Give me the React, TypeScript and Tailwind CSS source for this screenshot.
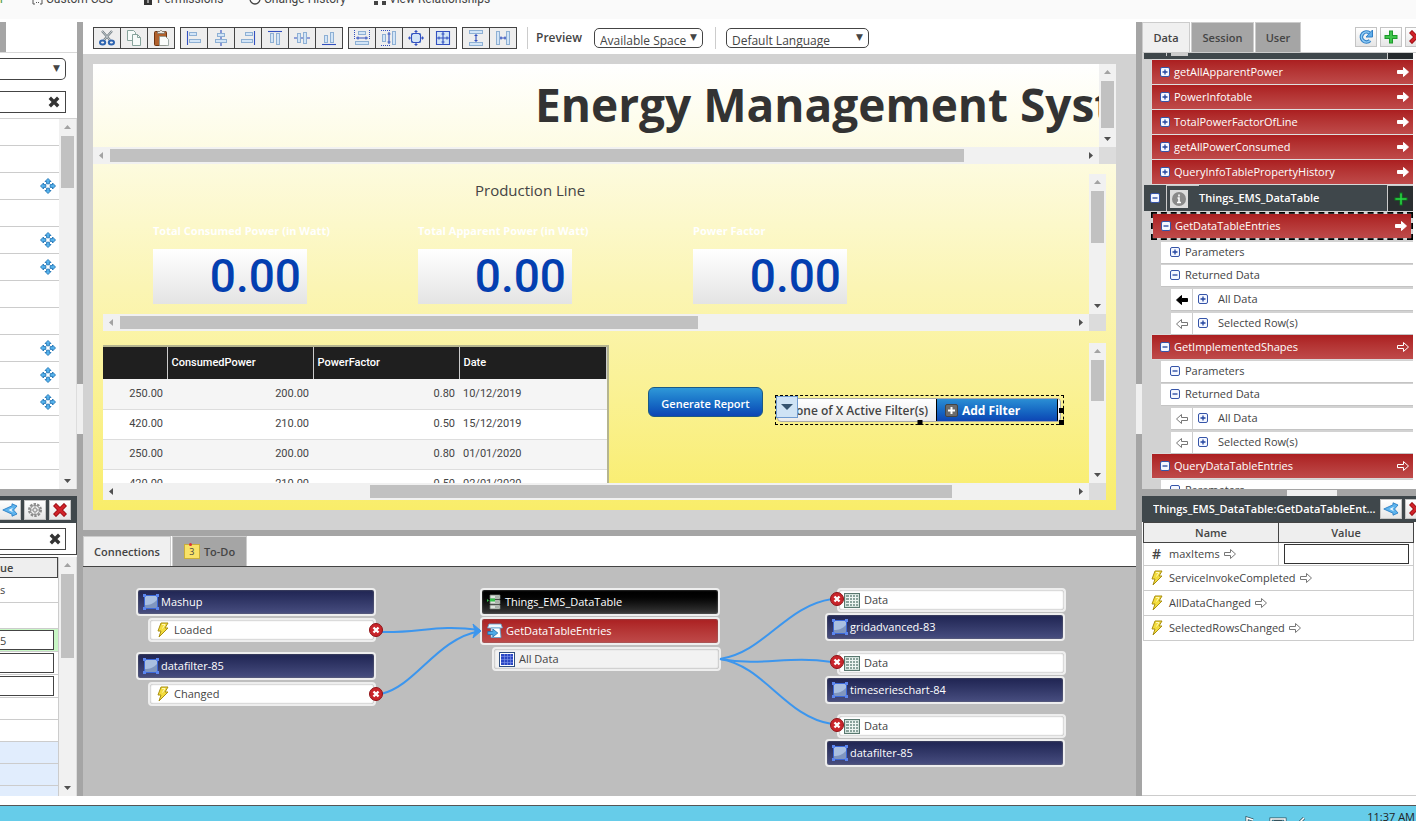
import { ReactNode } from 'react';
import clsx from 'clsx';

const EVENT_PATH = 'M5 1h7L9 6h3L3 15l2-6H2z';

const Bolt = () => (
  <svg width="14" height="16" viewBox="0 0 14 16" className="shrink-0">
    <path d={EVENT_PATH} fill="#f3dc3c" stroke="#a98f12" strokeWidth="1" strokeLinejoin="round" />
    <path d="M6 2.500h3L6.500 6.500" fill="none" stroke="#fff8b8" />
  </svg>
);

interface ArrowProps {
  left?: boolean;
  fill?: string;
  stroke?: string;
}

const Arrow = ({ left, fill = 'none', stroke = '#777' }: ArrowProps) => (
  <svg width="12" height="10" viewBox="0 0 12 10" className={clsx('shrink-0', left && 'rotate-180')}>
    <path d="M.5 3.500h6v-3L11.500 5l-5 4.500v-3h-6z" fill={fill} stroke={stroke} />
  </svg>
);

const Toggle = ({ open }: { open?: boolean }) => (
  <svg width="10" height="10" viewBox="0 0 10 10" className="shrink-0">
    <rect x=".5" y=".5" width="9" height="9" rx="1.500" fill="#f4f7ff" stroke="#3554a8" />
    <path d={open ? 'M2.500 5h5' : 'M2.500 5h5M5 2.500v5'} stroke="#2244a0" strokeWidth="1.300" />
  </svg>
);

const CloseX = () => (
  <svg width="12" height="12" viewBox="0 0 12 12">
    <path d="M3 3l6 6M9 3l-6 6" stroke="#333" strokeWidth="3.400" strokeLinecap="square" strokeLinejoin="round" />
  </svg>
);

const RedX = () => (
  <svg width="14" height="14" viewBox="0 0 14 14" className="shrink-0">
    <path d="M3 3l8 8M11 3l-8 8" stroke="#9c0f14" strokeWidth="4.400" strokeLinecap="square" />
    <path d="M3 3l8 8M11 3l-8 8" stroke="#d1232a" strokeWidth="2.600" strokeLinecap="square" />
  </svg>
);

const GreenPlus = ({ dark }: { dark?: boolean }) => (
  <svg width="14" height="14" viewBox="0 0 14 14" className="shrink-0">
    <path d="M7 .5v13M.5 7h13" stroke={dark ? '#0d7a1c' : '#1c9a2a'} strokeWidth={dark ? 3 : 4} />
    <path d="M7 1.500v11M1.500 7h11" stroke={dark ? '#2ad645' : '#3fc44b'} strokeWidth={dark ? 1.500 : 2} />
  </svg>
);

const Share = () => (
  <svg width="16" height="14" viewBox="0 0 16 14" className="shrink-0">
    <path d="M.8 7L10 2.800V.800l5 2.200-3.500 4 3.500 4-5 2.200v-2z" fill="#5db4ee" stroke="#2c7fc4" strokeWidth=".9" strokeLinejoin="round" />
    <path d="M6.500 7l4.500-2.200-1.500 2.200 1.500 2.200z" fill="#f4f9fd" />
  </svg>
);

const Gear = () => (
  <svg width="16" height="16" viewBox="0 0 16 16" fill="none" className="shrink-0">
    <circle cx="8" cy="8" r="5.800" stroke="#8c8c8c" strokeWidth="2.400" strokeDasharray="2.400 1.200" />
    <circle cx="8" cy="8" r="4.600" fill="#e9e9e9" stroke="#8f8f8f" />
    <circle cx="8" cy="8" r="2" stroke="#8f8f8f" />
    <path d="M8 3.500v2.500M8 10v2.500M3.500 8H6M10 8h2.500" stroke="#9a9a9a" />
  </svg>
);

const Refresh = () => (
  <svg width="16" height="16" viewBox="0 0 16 16" fill="none" className="shrink-0">
    <path d="M12 11.500A5 5 0 1 1 11.500 4" stroke="#2f7fc6" strokeWidth="3.600" />
    <path d="M12 11.500A5 5 0 1 1 11.500 4" stroke="#8fcbf5" strokeWidth="1.600" />
    <path d="M14.500 1v7H8z" fill="#62aee9" stroke="#2f7fc6" />
  </svg>
);

const Move = () => (
  <svg width="16" height="16" viewBox="0 0 16 16" className="shrink-0" fill="#57b4ee" stroke="#2374b4" strokeWidth=".9">
    <path d="M8 .5l3 3H9.400v2.300H6.600V3.500H5z" />
    <path d="M8 15.500l3-3H9.400v-2.300H6.600v2.300H5z" />
    <path d="M.5 8l3-3v1.600h2.300v2.800H3.500V11z" />
    <path d="M15.500 8l-3-3v1.600h-2.300v2.800h2.300V11z" />
  </svg>
);

const WidgetIcon = () => (
  <svg width="16" height="16" viewBox="0 0 16 16" className="shrink-0">
    <rect x="1.500" y="1.500" width="13" height="13" fill="#a9bfe0" stroke="#3b68d8" />
    <path d="M2 14v-3c5 0 8-1 12-5v8z" fill="#7f96bf" />
    <path d="M0 0h3v3H0zM13 0h3v3h-3zM0 13h3v3H0zM13 13h3v3h-3z" fill="#5c86ee" />
  </svg>
);

const DataIcon = ({ blue }: { blue?: boolean }) => (
  <svg width="16" height="15" viewBox="0 0 16 15" className="shrink-0">
    <rect x=".5" y=".5" width="15" height="14" fill={blue ? '#fff' : '#d3e2dc'} stroke={blue ? '#2f4f7f' : '#59786f'} />
    <rect x="2" y="2" width="12" height="11" fill={blue ? '#2b47c4' : '#8aa39c'} />
    <path d="M2 4.500h12M2 7.500h12M2 10.500h12M5.500 2v11M8.500 2v11M11.500 2v11" stroke={blue ? '#8397ea' : '#eef5f2'} strokeWidth={blue ? .6 : 1} />
  </svg>
);

const ServerIcon = () => (
  <svg width="16" height="16" viewBox="0 0 16 16" className="shrink-0">
    <path d="M4 1h10v4H4zM4 6h10v4H4zM4 11h10v4H4z" fill="#dfe4df" stroke="#6d756d" strokeWidth=".8" />
    <path d="M9 3h4M9 8h4M9 13h4" stroke="#7b857b" />
    <path d="M4 4.500h5v3H4zM1 5l2 1.500L1 8z" fill="#35c24a" />
  </svg>
);

const ServiceIcon = () => (
  <svg width="16" height="16" viewBox="0 0 16 16" className="shrink-0">
    <path d="M2 1h12l1.500 4h-15z" fill="#eef7fd" stroke="#5c9dcb" strokeWidth=".8" />
    <path d="M4 5h9l1 9.500H4z" fill="#fff" stroke="#5c9dcb" strokeWidth=".8" />
    <path d="M.8 8.500h5V6l5 4-5 4v-2.500h-5z" fill="#4fabe8" stroke="#1f6fae" strokeWidth=".8" />
  </svg>
);

const Caret = ({ dir, off }: { dir: 'up' | 'down' | 'left' | 'right'; off?: boolean }) => {
  const d = {
    up: 'M1 6l3.500-4L8 6z',
    down: 'M1 3l3.500 4L8 3z',
    left: 'M6 1L2 4.500 6 8z',
    right: 'M3 1l4 3.500L3 8z',
  }[dir];
  return (
    <span className="flex h-[17px] w-[17px] shrink-0 items-center justify-center">
      <svg width="9" height="9" viewBox="0 0 9 9">
        <path d={d} fill={off ? '#a3a3a3' : '#505050'} />
      </svg>
    </span>
  );
};

interface ScrollProps {
  start?: string;
  thumb: string;
  startOff?: boolean;
}

const VScroll = ({ start, thumb, startOff = true }: ScrollProps) => (
  <div className="flex w-[17px] shrink-0 flex-col items-center bg-[#f1f1f1]">
    <Caret dir="up" off={startOff} />
    <div className={start} />
    <div className={clsx('w-[13px] bg-[#c1c1c1]', thumb)} />
    <div className="flex-1" />
    <Caret dir="down" />
  </div>
);

const HScroll = ({ start, thumb, startOff = true }: ScrollProps) => (
  <div className="flex h-[17px] shrink-0">
    <div className="flex flex-1 items-center bg-[#f1f1f1]">
      <Caret dir="left" off={startOff} />
      <div className={start} />
      <div className={clsx('h-[13px] bg-[#c1c1c1]', thumb)} />
      <div className="flex-1" />
      <Caret dir="right" />
    </div>
    <div className="w-[17px] bg-[#dcdcdc]" />
  </div>
);

const IconButton = ({ label, children }: { label: string; children: ReactNode }) => (
  <button aria-label={label} className="flex h-5 w-[22px] shrink-0 items-center justify-center border border-[#c4c4c4] bg-linear-to-b from-white to-[#e6e6e6]">
    {children}
  </button>
);

const TopNav = () => (
  <nav className="h-[19px] shrink-0 overflow-hidden bg-[#fafafa] font-['Roboto',sans-serif] text-[12px] text-[#444]">
    <div className="-mt-[9px] flex h-4 items-center">
      <span className="w-8 shrink-0 text-[#4c9a3a]">r</span>
      <a href="#css" className="flex w-[112px] items-center gap-[3px]">
        <svg width="11" height="12" viewBox="0 0 11 12" fill="none" stroke="#555">
          <path d="M3 1H1v10h2M8 1h2v10H8M4 9.500h1M6 9.500h1" />
        </svg>
        Custom CSS
      </a>
      <a href="#permissions" className="flex w-[105px] items-center gap-[5px]">
        <svg width="8" height="12" viewBox="0 0 8 12">
          <path d="M0 4h8v8H0z" fill="#333" />
          <path d="M4 6v4" stroke="#fff" />
        </svg>
        Permissions
      </a>
      <a href="#history" className="flex w-[125px] items-center gap-[3px]">
        <svg width="12" height="12" viewBox="0 0 12 12" fill="none" stroke="#444" strokeWidth="1.300">
          <circle cx="6" cy="6" r="5" />
        </svg>
        Change History
      </a>
      <a href="#relationships" className="flex items-center gap-[3px]">
        <svg width="12" height="12" viewBox="0 0 12 12" fill="#444">
          <path d="M4 0h4v4H4zM0 8h4v4H0zM8 8h4v4H8z" />
        </svg>
        View Relationships
      </a>
    </div>
  </nav>
);

const hasMove = [false, false, true, false, true, true, false, false, true, true, true, false, false, false];

const LeftPanel = () => (
  <aside className="flex w-[77px] shrink-0 flex-col">
    <div className="flex h-[467px] flex-col overflow-hidden">
      <div className="h-[31px] shrink-0 border-b border-[#d8d8d8]">
        <div className="h-[30px] w-1.5 bg-[#a5a5a5]" />
      </div>
      <div className="flex h-[65px] shrink-0 flex-col gap-[11px] pt-[5px]">
        <div className="relative h-[22px] w-[66px]">
          <select aria-label="Widget category" className="h-full w-full appearance-none rounded-r-[5px] border border-l-0 border-[#444] bg-white">
            <option></option>
          </select>
          <span className="pointer-events-none absolute top-1 right-1.5 text-[9px] leading-3 font-['DejaVu_Sans',sans-serif]">▼</span>
        </div>
        <div className="flex h-[22px] w-[66px] items-center border border-l-0 border-[#444] pr-[5px]">
          <input aria-label="Filter widgets" className="h-full w-0 flex-1" />
          <button aria-label="Clear filter"><CloseX /></button>
        </div>
      </div>
      <div className="flex min-h-0 flex-1 border-t border-[#d2d2d2]">
        <ul className="flex-1 overflow-hidden">
          {hasMove.map((m, i) => (
            <li key={i} className="flex h-[27px] items-center justify-end border-b border-[#ccc] pr-[3px]">
              {m && <Move />}
            </li>
          ))}
        </ul>
        <VScroll thumb="h-[52px]" />
        <div className="w-px bg-[#ddd]" />
      </div>
    </div>
    <div className="h-[7px] shrink-0 bg-[#a5a5a5]" />
    <div className="flex h-[27px] shrink-0 items-center justify-end gap-[3px] bg-[#3f474b] pr-1.5">
      <IconButton label="Bindings"><Share /></IconButton>
      <IconButton label="Configure"><Gear /></IconButton>
      <IconButton label="Delete"><RedX /></IconButton>
    </div>
    <div className="flex h-8 shrink-0 items-center border-r border-b border-[#444]">
      <div className="flex h-[22px] w-[66px] items-center border border-l-0 border-[#444] pr-1">
        <input aria-label="Filter properties" className="h-full w-0 flex-1" />
        <button aria-label="Clear property filter"><CloseX /></button>
      </div>
    </div>
    <div className="flex min-h-0 flex-1 pt-0.5">
      <div className="flex-1 overflow-hidden border-r border-[#ccc]">
        <table className="w-full border-collapse text-left">
          <thead>
            <tr className="h-5">
              <th className="border border-l-0 border-[#444] bg-[#eee] p-0 font-semibold">ue</th>
            </tr>
          </thead>
          <tbody>
            <tr className="h-[25px] border-b border-[#ccc]"><td className="p-0 leading-3">s</td></tr>
            <tr className="h-[26px] border-b border-[#ccc]"><td /></tr>
            {['5', '', ''].map((v, i) => (
              <tr key={i} className={clsx('h-[23px] border-b border-[#ccc]', i === 0 && 'bg-[#c8f7c5]')}>
                <td className="p-0">
                  <input aria-label={`Property value ${i + 1}`} defaultValue={v} className="block h-5 w-[54px] border border-l-0 border-[#444] bg-white" />
                </td>
              </tr>
            ))}
            <tr className="h-[22px] border-b border-[#ccc]"><td /></tr>
            <tr className="h-[22px] border-b border-[#ccc]"><td /></tr>
            <tr className="h-[22px] border-b border-[#ccc] bg-[#e1edfd]"><td /></tr>
            <tr className="h-[22px] border-b border-[#ccc] bg-[#e1edfd]"><td /></tr>
            <tr className="h-[22px] border-b border-[#ccc] bg-[#e1edfd]"><td /></tr>
          </tbody>
        </table>
      </div>
      <VScroll thumb="h-[84px]" />
      <div className="w-px bg-[#ddd]" />
    </div>
  </aside>
);

// pale blue blocks, dark blue guide lines
interface Tool {
  name: string;
  boxes?: [number, number, number, number][];
  lines?: string;
  dots?: string;
  art?: ReactNode;
}

const toolGroups: Tool[][] = [
  [
    {
      name: 'Cut',
      art: (
        <g fill="none">
          <path d="M3 1l8 9M13 1L5 10" stroke="#6f7b80" strokeWidth="2.200" />
          <path d="M3 1l8 9M13 1L5 10" stroke="#dfe5e8" strokeWidth=".8" />
          <ellipse cx="3.600" cy="12.500" rx="2.600" ry="2" stroke="#2e64b0" strokeWidth="2" />
          <ellipse cx="12.400" cy="12.500" rx="2.600" ry="2" stroke="#2e64b0" strokeWidth="2" />
        </g>
      ),
    },
    {
      name: 'Copy',
      art: (
        <g fill="#f6fbf9" stroke="#87a49c">
          <path d="M1.500.500h6l2 2v8h-8z" />
          <path d="M6.500 4.500h5l3 3v8h-8z" />
          <path d="M11.500 4.500v3h3" fill="none" />
        </g>
      ),
    },
    {
      name: 'Paste',
      art: (
        <g>
          <rect x="1.500" y="1.500" width="12" height="14" rx="1" fill="#b0602c" stroke="#6f3410" />
          <path d="M4.500 3.500v-2h2l1-1h1l1 1h2v2z" fill="#e8e4dd" stroke="#7c7468" strokeWidth=".8" />
          <path d="M6.500 6.500h6l3 3v6h-9z" fill="#fafcfb" stroke="#8a9a96" strokeWidth=".8" />
        </g>
      ),
    },
  ],
  [
    { name: 'Align left', boxes: [[3, 2, 8, 4], [3, 9, 12, 4]], lines: 'M1.500 1v14' },
    { name: 'Align center', boxes: [[4, 3, 8, 4], [2, 9, 12, 4]], lines: 'M8 0v3M8 7v2M8 13v3' },
    { name: 'Align right', boxes: [[5, 2, 8, 4], [1, 9, 12, 4]], lines: 'M14.500 1v14' },
    { name: 'Align top', boxes: [[3, 3, 4, 10], [9, 3, 4, 12]], lines: 'M1 1.500h14' },
    { name: 'Align middle', boxes: [[3, 3, 4, 10], [9, 2, 4, 12]], lines: 'M0 8h3M7 8h2M13 8h3' },
    { name: 'Align bottom', boxes: [[3, 5, 4, 8], [9, 2, 4, 11]], lines: 'M1 14.500h14' },
  ],
  [
    { name: 'Same width', boxes: [[4, 1, 8, 4], [1, 11, 14, 4]], lines: 'M2 8h12M4 6.500v3M12 6.500v3', dots: 'M.5 0v10M15.500 0v10' },
    { name: 'Same height', boxes: [[1, 4, 4, 8], [11, 1, 4, 14]], lines: 'M8 2v12M6.500 4h3M6.500 12h3', dots: 'M0 .5h10M0 15.500h10' },
    { name: 'Same size', boxes: [[3, 3, 10, 10]], lines: 'M5 3.500h6l1.500 1.500v6L11 12.500H5L3.500 11V5zM8 0v3M8 13v3M0 8h3M13 8h3M6.500 1.500h3M6.500 14.500h3M1.500 6.500v3M14.500 6.500v3' },
    { name: 'Fit to grid', boxes: [[1, 1, 14, 14]], lines: 'M1.500 1.500h13v13h-13zM8 1v14M1 8h14M6.500 4h3M6.500 12h3M4 6.500v3M12 6.500v3' },
  ],
  [
    { name: 'Distribute vertically', boxes: [[1, 0, 14, 4], [1, 12, 14, 4]], lines: 'M8 4v8M6.500 5.500h3M6.500 10.500h3' },
    { name: 'Distribute horizontally', boxes: [[1, 1, 4, 14], [11, 1, 4, 14]], lines: 'M5 8h6M6 6.500v3M10 6.500v3' },
  ],
];

const ToolIcon = ({ tool }: { tool: Tool }) => (
  <svg width="16" height="16" viewBox="0 0 16 16">
    {tool.art}
    {tool.boxes?.map(([x, y, w, h], i) => (
      <rect key={i} x={x + 0.5} y={y + 0.5} width={w - 1} height={h - 1} fill="#d3e5f7" stroke="#8eb0d4" />
    ))}
    {tool.lines && <path d={tool.lines} fill="none" stroke="#3250c0" strokeWidth="1.100" />}
    {tool.dots && <path d={tool.dots} fill="none" stroke="#3250c0" strokeDasharray="1 1" />}
  </svg>
);

const Picker = ({ label, value, width }: { label: string; value: string; width: string }) => (
  <div className={clsx('relative h-5', width)}>
    <select aria-label={label} className="h-5 w-full appearance-none rounded-[5px] border border-[#444] bg-white px-[5px] pt-1 text-[12px] leading-4">
      <option>{value}</option>
    </select>
    <span className="pointer-events-none absolute top-[3px] right-1.5 text-[9px] leading-3 font-['DejaVu_Sans',sans-serif]">▼</span>
  </div>
);

const Toolbar = () => (
  <div className="flex h-8 shrink-0 items-center bg-white pl-2.5">
    <div className="flex gap-[5px]">
      {toolGroups.map((g, i) => (
        <div key={i} className="flex divide-x divide-[#444] border border-[#444] bg-[#eee]">
          {g.map((tool) => (
            <button key={tool.name} aria-label={tool.name} className="box-content flex h-5 w-[26px] items-center justify-center">
              <ToolIcon tool={tool} />
            </button>
          ))}
        </div>
      ))}
    </div>
    <div className="ml-2.5 h-[22px] w-px bg-[#ccc]" />
    <span className="mr-3 ml-2 text-[12px] font-semibold">Preview</span>
    <Picker label="Preview size" value="Available Space" width="w-[109px]" />
    <div className="mr-2.5 ml-3 h-[22px] w-px bg-[#ccc]" />
    <Picker label="Language" value="Default Language" width="w-[143px]" />
  </div>
);

const meters = [
  { label: 'Total Consumed Power (in Watt)', value: '0.00', width: 'w-[265px]' },
  { label: 'Total Apparent Power (in Watt)', value: '0.00', width: 'w-[275px]' },
  { label: 'Power Factor', value: '0.00', width: 'w-[154px]' },
];

const rows = [
  ['250.00', '200.00', '0.80', '10/12/2019'],
  ['420.00', '210.00', '0.50', '15/12/2019'],
  ['250.00', '200.00', '0.80', '01/01/2020'],
  ['420.00', '210.00', '0.50', '02/01/2020'],
];

const DataGrid = () => (
  <div className="mt-0.5 w-[506px] shrink-0 overflow-hidden border-t-2 border-r-2 border-[#b5b58f] bg-white font-['Roboto',sans-serif]">
    <table className="w-full table-fixed border-collapse text-left">
      <thead className="bg-[#1f1f1f] text-white">
        <tr className="h-8">
          <th className="w-16 border-r border-[#ccc]" />
          <th className="w-[146px] border-r border-[#ccc] px-1 font-medium">ConsumedPower</th>
          <th className="w-[146px] border-r border-[#ccc] px-1 font-medium">PowerFactor</th>
          <th className="border-r border-[#ccc] px-1 font-medium">Date</th>
        </tr>
      </thead>
      <tbody className="text-[#444]">
        {rows.map((r, i) => (
          <tr key={i} className={clsx('h-[30px] border-b border-[#ddd]', i % 2 === 0 && 'bg-[#f5f5f5]')}>
            <td className="pr-1 text-right">{r[0]}</td>
            <td className="pr-1 text-right">{r[1]}</td>
            <td className="pr-1 text-right">{r[2]}</td>
            <td className="pl-1">{r[3]}</td>
          </tr>
        ))}
      </tbody>
    </table>
  </div>
);

const FilterWidget = () => (
  <div className="relative mt-[52px] ml-3 flex h-[30px] w-[289px] shrink-0 border border-dashed border-black pt-0.5 pr-0.5 pb-0.5 pl-px">
    <div className="flex flex-1 items-center overflow-hidden rounded-[4px] border border-[#aaa] bg-linear-to-b from-white to-[#ebebeb] text-[12px] font-semibold">
      <span className="w-[158px] shrink-0 pt-0.5 pl-[18px] whitespace-nowrap">one of X Active Filter(s)</span>
      <button className="flex h-full w-[122px] items-center gap-1 border-x border-black bg-linear-to-b from-[#2b8ed4] to-[#0f45b4] pl-2 font-bold text-white">
        <svg width="13" height="13" viewBox="0 0 13 13">
          <rect x=".5" y=".5" width="12" height="12" rx="1.500" fill="#6b6b6b" stroke="#444" />
          <path d="M6.500 3v7M3 6.500h7" stroke="#fff" strokeWidth="2" />
        </svg>
        <span className="pt-px">Add Filter</span>
      </button>
    </div>
    <button aria-label="Widget menu" className="absolute top-0 left-0 flex h-[22px] w-[22px] items-center justify-center border border-[#6f9bd1] bg-[#cfe3f5]">
      <svg width="14" height="8" viewBox="0 0 14 8">
        <path d="M1 1h12L7 7z" fill="#35536f" />
      </svg>
    </button>
    <span className="absolute top-3 -right-px h-[5px] w-[5px] bg-black" />
    <span className="absolute -right-px -bottom-px h-[5px] w-[5px] bg-black" />
    <span className="absolute -bottom-px left-1/2 h-[5px] w-[5px] -translate-x-1/2 bg-black" />
  </div>
);

const Mashup = () => (
  <div className="h-[476px] shrink-0 bg-[#d2d2d2] p-2.5 pr-5 pb-5">
    <div className="flex h-full flex-col bg-linear-to-b from-white via-[#fbf5b4] to-[#f9ed69]">
      <section className="flex h-[100px] shrink-0 flex-col">
        <div className="flex min-h-0 flex-1">
          <div className="min-w-0 flex-1 overflow-hidden pt-2 pl-[442px]">
            <h1 className="text-[46px] leading-[64px] font-bold whitespace-nowrap text-[#333]">Energy Management System</h1>
          </div>
          <VScroll thumb="h-[47px]" />
        </div>
        <HScroll thumb="w-[854px]" />
      </section>
      <section className="mx-2.5 mt-2.5 mb-3 flex h-[157px] shrink-0 flex-col">
        <div className="flex min-h-0 flex-1">
          <div className="min-w-0 flex-1 overflow-hidden">
            <h2 className="h-[50px] pl-[372px] text-[15px] leading-[32px]">Production Line</h2>
            <div className="flex pl-[50px]">
              {meters.map((m) => (
                <div key={m.label} className={clsx('shrink-0', m.width)}>
                  <div className="h-[25px] text-[11px] leading-[14px] font-bold whitespace-nowrap text-white">{m.label}</div>
                  <div className="flex h-[55px] w-[154px] items-center justify-end bg-linear-to-b from-white to-[#e4e4e4] pr-1.5 font-['Roboto',sans-serif] text-[46px] leading-[55px] font-medium text-[#043fb0]">
                    {m.value}
                  </div>
                </div>
              ))}
            </div>
          </div>
          <VScroll thumb="h-[52px]" />
        </div>
        <HScroll thumb="w-[578px]" />
      </section>
      <section className="mx-2.5 flex h-[157px] shrink-0 flex-col">
        <div className="flex min-h-0 flex-1">
          <div className="flex min-w-0 flex-1 items-start overflow-hidden">
            <DataGrid />
            <button className="mt-11 ml-[39px] h-[30px] w-[115px] shrink-0 rounded-md border border-[#1b5a86] bg-linear-to-b from-[#2f98d8] to-[#0f45b4] pt-1 font-semibold text-white">
              Generate Report
            </button>
            <FilterWidget />
          </div>
          <VScroll thumb="h-[41px]" />
        </div>
        <HScroll start="w-[250px]" thumb="w-[582px]" startOff={false} />
      </section>
    </div>
  </div>
);

interface Node {
  label: string;
  kind: 'widget' | 'thing' | 'service' | 'event' | 'result' | 'data';
  place: string;
}

const nodes: Node[] = [
  { label: 'Mashup', kind: 'widget', place: 'left-[53px] top-[21px]' },
  { label: 'Loaded', kind: 'event', place: 'left-[65px] top-[51px]' },
  { label: 'datafilter-85', kind: 'widget', place: 'left-[53px] top-[85px]' },
  { label: 'Changed', kind: 'event', place: 'left-[65px] top-[115px]' },
  { label: 'Things_EMS_DataTable', kind: 'thing', place: 'left-[397px] top-[21px]' },
  { label: 'GetDataTableEntries', kind: 'service', place: 'left-[397px] top-[50px]' },
  { label: 'All Data', kind: 'result', place: 'left-[409px] top-[80px]' },
  { label: 'Data', kind: 'data', place: 'left-[754px] top-[21px]' },
  { label: 'gridadvanced-83', kind: 'widget', place: 'left-[742px] top-[46px]' },
  { label: 'Data', kind: 'data', place: 'left-[754px] top-[84px]' },
  { label: 'timeserieschart-84', kind: 'widget', place: 'left-[742px] top-[109px]' },
  { label: 'Data', kind: 'data', place: 'left-[754px] top-[147px]' },
  { label: 'datafilter-85', kind: 'widget', place: 'left-[742px] top-[172px]' },
];

const nodeStyle = {
  widget: 'w-[240px] h-7 pl-[5px] gap-0.5 font-medium text-white bg-linear-to-b from-[#1f2452] to-[#484e80]',
  thing: 'w-[240px] h-7 pl-1 gap-[3px] font-medium text-white bg-linear-to-b from-black to-[#3a3a3a]',
  service: 'w-[240px] h-7 pl-[5px] gap-[3px] font-medium text-white bg-linear-to-b from-[#ab1e20] to-[#bf4a4a]',
  event: 'w-[228px] h-6 pl-1.5 gap-1 bg-white',
  result: 'w-[229px] h-6 pl-[5px] gap-1 bg-[#f2f2f2]',
  data: 'w-[229px] h-6 pl-[5px] gap-1 bg-white',
};

const nodeIcon = {
  widget: <WidgetIcon />,
  thing: <ServerIcon />,
  service: <ServiceIcon />,
  event: <Bolt />,
  result: <DataIcon blue />,
  data: <DataIcon />,
};

const removeSpots = ['left-[286px] top-[56px]', 'left-[286px] top-[120px]', 'left-[747px] top-[25px]', 'left-[747px] top-[88px]', 'left-[747px] top-[151px]'];

const Connections = () => (
  <div className="relative min-h-0 flex-1 overflow-hidden bg-[#bebebe]">
    {nodes.map((n, i) => (
      <div key={i} className={clsx('absolute flex items-center rounded-[4px] border-2 border-[#eee] shadow-[inset_0_0_2px_#777]', n.place, nodeStyle[n.kind])}>
        {nodeIcon[n.kind]}
        <span>{n.label}</span>
      </div>
    ))}
    <svg className="pointer-events-none absolute top-0 left-0" width="1053" height="229" fill="none" stroke="#3c96ee" strokeWidth="2">
      <path d="M298 65c40 1 55-8 99-2" />
      <path d="M298 127c35-8 55-55 99-63" />
      <path d="M390 57l8 7-8 7 2-7z" fill="#3c96ee" strokeWidth="1" />
      <path d="M637 92c45-7 65-53 112-60" />
      <path d="M637 92c45 8 65-4 112 3" />
      <path d="M637 92c45 7 65 58 112 65" />
    </svg>
    {removeSpots.map((p) => (
      <button key={p} aria-label="Remove connection" className={clsx('absolute', p)}>
        <svg width="14" height="14" viewBox="0 0 14 14">
          <circle cx="7" cy="7" r="6.500" fill="#c9252b" stroke="#8f1216" />
          <path d="M4.500 4.500l5 5M9.500 4.500l-5 5" stroke="#fff" strokeWidth="2.400" />
        </svg>
      </button>
    ))}
  </div>
);

const Center = () => (
  <main className="flex min-w-0 flex-1 flex-col">
    <Toolbar />
    <Mashup />
    <div className="h-1.5 shrink-0 bg-[#a5a5a5]" />
    <div className="flex h-[31px] shrink-0 border-b border-[#444] bg-white font-semibold text-[#444]">
      <button className="w-[88px] border border-b-0 border-[#ccc] bg-[#f0f0f0]">Connections</button>
      <button className="ml-px flex w-[75px] items-center justify-center gap-1 border border-b-0 border-[#ccc] bg-[#a5a5a5]">
        <span className="relative flex h-[15px] w-4 items-center justify-center border border-[#c9ae3a] bg-[#f8e268] text-[9px] font-normal">
          3
          <span className="absolute -top-0.5 left-1 h-[3px] w-[3px] rounded-full bg-[#d33]" />
        </span>
        To-Do
      </button>
    </div>
    <Connections />
  </main>
);

const ServiceRow = ({ label, open, bound }: { label: string; open?: boolean; bound?: boolean }) => (
  <div className="ml-2 flex h-6 items-center gap-1 bg-linear-to-b from-[#ab1e20] to-[#bf4a4a] pr-1 pl-2 text-white shadow-[0_0_1px_#fff]">
    <Toggle open={open} />
    <span className="flex-1">{label}</span>
    <Arrow fill={bound ? '#fff' : 'none'} stroke="#fff" />
  </div>
);

const LeafRow = ({ label, open }: { label: string; open?: boolean }) => (
  <div className="ml-[17px] flex h-[22px] items-center gap-[5px] border-b border-[#c4c4c4] bg-white pb-px pl-[9px]">
    <Toggle open={open} />
    {label}
  </div>
);

const DataRow = ({ label, bound }: { label: string; bound?: boolean }) => (
  <div className="ml-[27px] flex h-[22px] items-center border-b border-[#c4c4c4] bg-white">
    <span className="flex h-full w-[22px] items-center justify-center border-r border-[#ccc]">
      <Arrow left fill={bound ? '#000' : 'none'} stroke={bound ? '#000' : '#777'} />
    </span>
    <span className="flex items-center gap-2.5 pb-px pl-[5px]">
      <Toggle />
      {label}
    </span>
  </div>
);

const closedServices = ['getAllApparentPower', 'PowerInfotable', 'TotalPowerFactorOfLine', 'getAllPowerConsumed', 'QueryInfoTablePropertyHistory'];

const events = ['ServiceInvokeCompleted', 'AllDataChanged', 'SelectedRowsChanged'];

const RightPanel = () => (
  <aside className="flex w-[274px] shrink-0 flex-col overflow-hidden">
    <div className="flex h-[31px] shrink-0 items-center border-b border-[#ccc]">
      <div className="flex h-[30px] flex-1 gap-px font-semibold text-[#444]">
        <button className="w-12 border border-b-0 border-[#ccc] bg-[#f0f0f0]">Data</button>
        <button className="w-[63px] border border-b-0 border-[#ccc] bg-[#a5a5a5]">Session</button>
        <button className="w-[46px] border border-b-0 border-[#ccc] bg-[#a5a5a5]">User</button>
      </div>
      <div className="-mr-[11px] flex gap-[3px]">
        <IconButton label="Refresh"><Refresh /></IconButton>
        <IconButton label="Add entity"><GreenPlus /></IconButton>
        <IconButton label="Remove entity"><RedX /></IconButton>
      </div>
    </div>
    <div className="mr-[3px] h-[436px] shrink-0 overflow-hidden bg-[#d2d2d2] pl-0.5">
      <div className="mb-px flex h-1.5 justify-between bg-[#3f474b] pl-[22px]">
        <div className="h-[3px] w-[22px] border-l border-[#ccc] pl-1">
          <div className="h-full bg-[#ccc]" />
        </div>
        <div className="h-full w-[26px] border-l border-[#ccc] bg-black/40" />
      </div>
      <div className="flex flex-col gap-px">
        {closedServices.map((s) => (
          <ServiceRow key={s} label={s} bound />
        ))}
        <div className="flex h-[26px] items-center bg-[#3f474b] font-semibold text-white">
          <span className="flex w-[22px] justify-center"><Toggle open /></span>
          <span className="flex h-full w-[33px] items-center border-t border-l border-[#ccc] pl-[3px]">
            <span className="flex h-[18px] w-[18px] items-center justify-center bg-[#ddd]">
              <svg width="14" height="14" viewBox="0 0 14 14">
                <circle cx="7" cy="7" r="7" fill="#8a8a8a" />
                <path d="M7 2.500v2M5.500 6H7v4.500M5 10.500h4" stroke="#fff" strokeWidth="1.600" fill="none" />
              </svg>
            </span>
          </span>
          <span className="flex-1">Things_EMS_DataTable</span>
          <button aria-label="Add service" className="flex h-full w-[26px] items-center justify-center border-t border-l border-[#ccc] bg-[#2a2f31]">
            <GreenPlus dark />
          </button>
        </div>
        <div className="ml-[7px] border-2 border-dashed border-black">
          <div className="-ml-2">
            <ServiceRow label="GetDataTableEntries" open bound />
          </div>
        </div>
      </div>
      <div className="flex flex-col gap-px pt-0.5">
        <LeafRow label="Parameters" />
        <LeafRow label="Returned Data" open />
      </div>
      <div className="flex flex-col gap-0.5 pt-0.5">
        <DataRow label="All Data" bound />
        <DataRow label="Selected Row(s)" />
      </div>
      <ServiceRow label="GetImplementedShapes" open />
      <div className="flex flex-col gap-px pt-0.5">
        <LeafRow label="Parameters" open />
        <LeafRow label="Returned Data" open />
      </div>
      <div className="flex flex-col gap-0.5 pt-0.5">
        <DataRow label="All Data" />
        <DataRow label="Selected Row(s)" />
      </div>
      <ServiceRow label="QueryDataTableEntries" open />
      <div className="pt-0.5">
        <LeafRow label="Parameters" open />
      </div>
    </div>
    <div className="flex h-[7px] shrink-0 items-end justify-center bg-[#a5a5a5] pl-[66px]">
      <div className="h-1.5 w-[50px] bg-[#f0f0f0]" />
    </div>
    <div className="-mr-[11px] flex h-[26px] shrink-0 items-center gap-[3px] bg-[#3f474b] pl-[11px]">
      <span className="min-w-0 flex-1 overflow-hidden font-semibold whitespace-nowrap text-white">Things_EMS_DataTable:GetDataTableEnt...</span>
      <IconButton label="Service bindings"><Share /></IconButton>
      <IconButton label="Remove service"><RedX /></IconButton>
    </div>
    <div className="flex-1 border-b border-[#ccc] pr-0.5 pl-px">
      <table className="w-full table-fixed border-collapse">
        <thead>
          <tr className="h-5 bg-[#eee]">
            <th className="border border-[#444] font-semibold">Name</th>
            <th className="border border-[#444] font-semibold">Value</th>
          </tr>
        </thead>
        <tbody>
          <tr className="h-[23px] border border-[#ccc]">
            <td className="border-r border-[#ccc] p-0 pl-2">
              <label htmlFor="maxItems" className="flex items-center">
                <span className="w-[17px] text-[14px] leading-4 font-semibold">#</span>
                <span className="pr-1">maxItems</span>
                <Arrow />
              </label>
            </td>
            <td className="p-0 pl-[5px]">
              <input id="maxItems" className="block h-5 w-[125px] border border-[#333]" />
            </td>
          </tr>
          {events.map((e) => (
            <tr key={e} className="h-[25px] border border-[#ccc]">
              <td colSpan={2} className="p-0 pl-1.5">
                <span className="flex items-center">
                  <Bolt />
                  <span className="pr-1 pl-[5px]">{e}</span>
                  <Arrow />
                </span>
              </td>
            </tr>
          ))}
        </tbody>
      </table>
    </div>
  </aside>
);

const VSplitter = () => (
  <div className="flex w-1.5 shrink-0 flex-col bg-[#a5a5a5] pt-[362px]">
    <div className="h-[50px] bg-[#f0f0f0]" />
  </div>
);

export default function App() {
  return (
    <div className="flex h-screen flex-col overflow-hidden bg-white font-['Open_Sans',sans-serif] text-[11px] leading-4 text-[#444]">
      <TopNav />
      <div className="mt-[3px] flex min-h-0 flex-1">
        <LeftPanel />
        <VSplitter />
        <Center />
        <VSplitter />
        <RightPanel />
      </div>
      <footer className="mt-[9px] flex h-4 shrink-0 justify-end gap-[60px] overflow-hidden border-t border-[#555] bg-[#66cce9] text-[#222]">
        <svg width="62" height="16" viewBox="0 0 62 16" fill="none" stroke="#fff" strokeWidth="1.500">
          <path d="M2 20v-8l6 2M26 20v-7h14v7M29 16h8M59 12l-6 6" stroke="#35525c" strokeWidth="3" />
          <path d="M2 20v-8l6 2M26 20v-7h14v7M29 16h8M59 12l-6 6" />
        </svg>
        <time className="pt-[3px] pr-px text-[11px] leading-4">11:37 AM</time>
      </footer>
    </div>
  );
}
